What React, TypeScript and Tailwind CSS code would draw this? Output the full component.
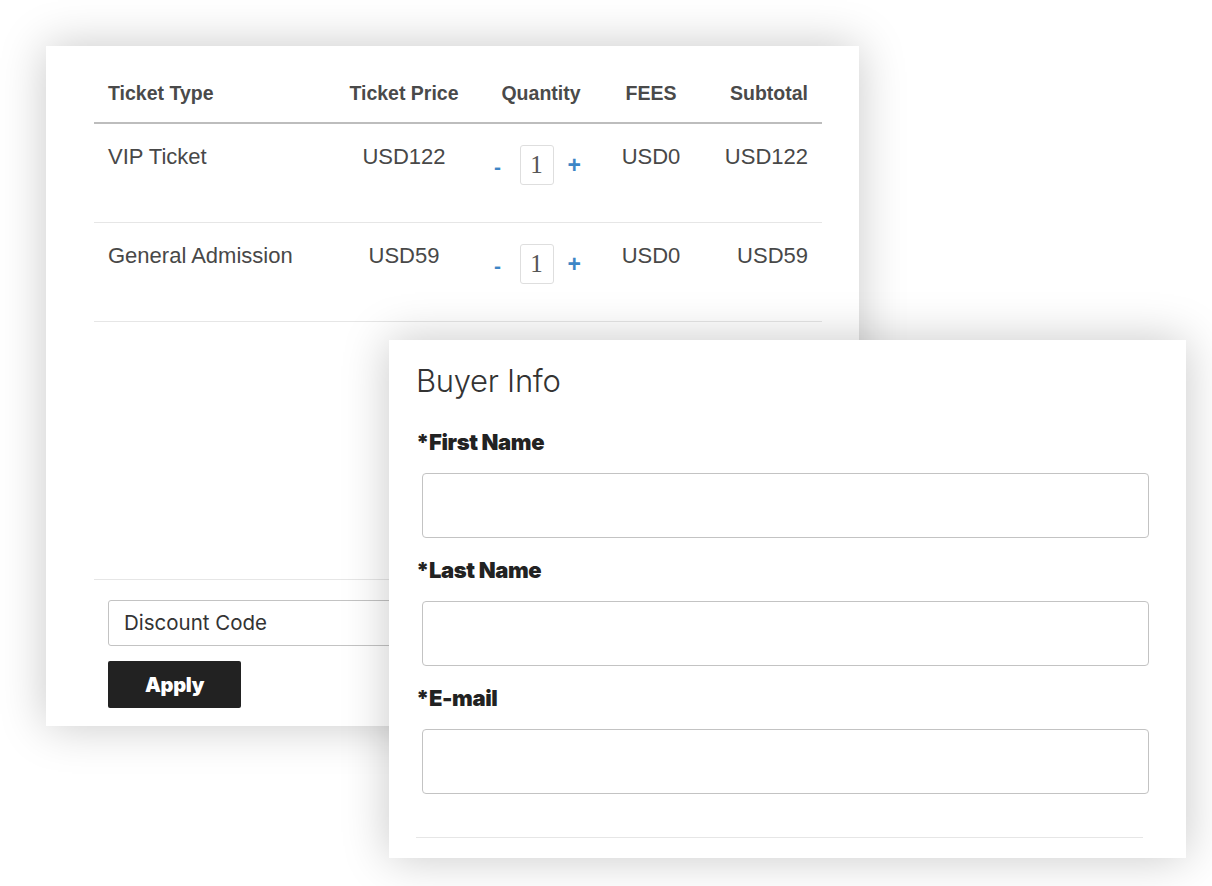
import React from "react";

const rows = [
  { type: "VIP Ticket", price: "USD122", fees: "USD0", subtotal: "USD122" },
  { type: "General Admission", price: "USD59", fees: "USD0", subtotal: "USD59" },
];

function Qty() {
  return (
    <div className="flex items-center justify-center pr-[10px]">
      <span className="text-[#3d86c6] font-bold text-[21px] leading-none w-[8px] text-center mt-[2px]">-</span>
      <div className="ml-[18px] w-[34px] h-[40px] border border-[#dedede] rounded-[3px] flex items-center justify-center text-[25px] text-[#555] [font-family:'Liberation_Serif',serif]">
        1
      </div>
      <span className="ml-[14px] text-[#3d86c6] font-bold text-[23px] leading-none w-[11px] text-center">+</span>
    </div>
  );
}

function Field({ label }: { label: string }) {
  return (
    <div>
      <div className="h-[28px] flex items-center text-[22px] font-black text-[#222] tracking-[-0.4px]">{label}</div>
      <div className="mt-[17px] ml-[6px] w-[727px] h-[65px] border border-[#c3c3c3] rounded-[4px] bg-white" />
    </div>
  );
}

export default function App() {
  return (
    <div className="relative w-[1212px] h-[886px] bg-white overflow-hidden">
      {/* Ticket card */}
      <div className="absolute left-[46px] top-[46px] w-[813px] h-[680px] bg-white shadow-[0_0_44px_rgba(0,0,0,0.22)] px-[48px] pt-[20px] [font-family:'Liberation_Sans',Arial,sans-serif]">
        <div className="w-[728px]">
          <div className="grid grid-cols-[236px_148px_126px_94px_124px] h-[58px] items-center border-b-2 border-[#bdbdbd] text-[19.5px] font-bold text-[#4a4a4a]">
            <div className="pl-[14px]">Ticket Type</div>
            <div className="text-center">Ticket Price</div>
            <div className="text-center">Quantity</div>
            <div className="text-center">FEES</div>
            <div className="text-right pr-[14px]">Subtotal</div>
          </div>
          {rows.map((r) => (
            <div
              key={r.type}
              className="grid grid-cols-[236px_148px_126px_94px_124px] h-[99px] items-start border-b border-[#e6e6e6] text-[22px] leading-[30px] text-[#484848]"
            >
              <div className="pl-[14px] pt-[18px]">{r.type}</div>
              <div className="text-center pt-[18px]">{r.price}</div>
              <div className="pt-[21px]">
                <Qty />
              </div>
              <div className="text-center pt-[18px]">{r.fees}</div>
              <div className="text-right pr-[14px] pt-[18px]">{r.subtotal}</div>
            </div>
          ))}
          <div className="h-[257px]" />
          <div className="border-t border-[#e6e6e6] pt-[20px] pl-[14px] [font-family:Inter,sans-serif]">
            <div className="w-[620px] h-[46px] border border-[#c3c3c3] rounded-[3px] flex items-center pl-[15px] text-[20.5px] text-[#333]">
              Discount Code
            </div>
            <button className="mt-[15px] w-[133px] h-[47px] bg-[#222] rounded-[2px] text-white text-[20px] font-black tracking-[-0.3px] flex items-center justify-center">
              Apply
            </button>
          </div>
        </div>
      </div>

      {/* Buyer info card */}
      <div className="absolute left-[389px] top-[340px] w-[797px] h-[518px] bg-white shadow-[0_0_44px_rgba(0,0,0,0.22)] pl-[27px] pt-[23px] [font-family:Inter,sans-serif]">
        <div className="h-[36px] flex items-center text-[31px] font-light text-[#333] tracking-[-0.3px]">Buyer Info</div>
        <div className="mt-[29px] flex flex-col gap-[18px]">
          <Field label="*First Name" />
          <Field label="*Last Name" />
          <Field label="*E-mail" />
        </div>
        <div className="mt-[43px] w-[727px] border-t border-[#e6e6e6]" />
      </div>
    </div>
  );
}
